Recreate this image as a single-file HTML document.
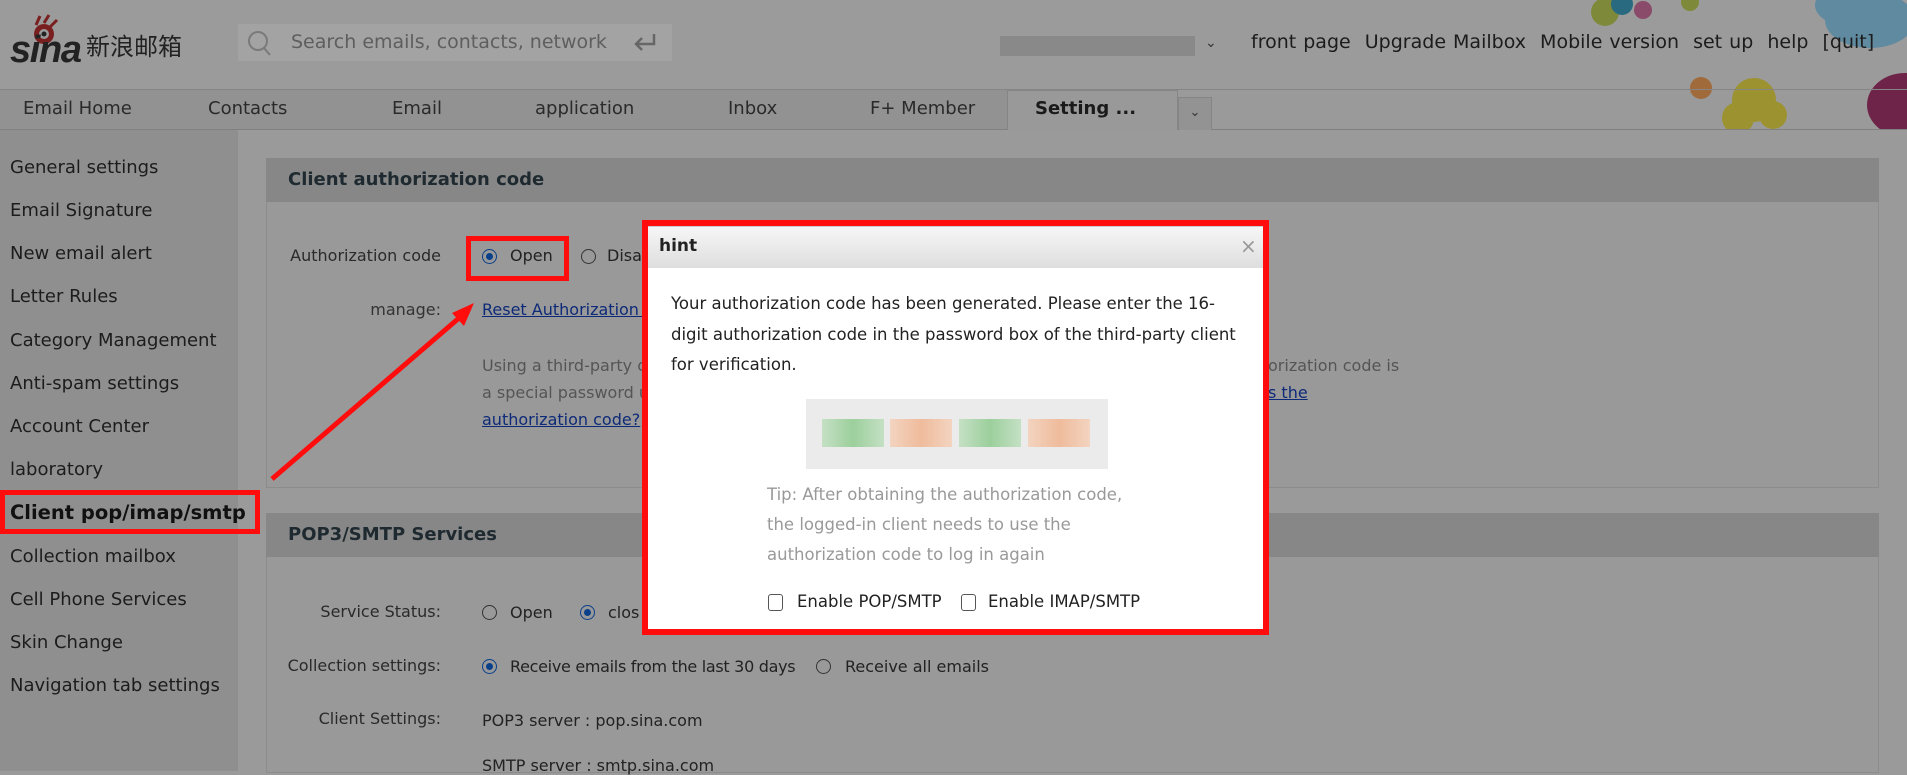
<!DOCTYPE html>
<html><head><meta charset="utf-8"><style>
*{margin:0;padding:0;box-sizing:border-box}
body{width:1907px;height:771px;overflow:hidden;background:#9a9a9a;font-family:"DejaVu Sans","Liberation Sans","Noto Sans CJK SC",sans-serif;position:relative;color:#1e1e1e}
.a{position:absolute;white-space:nowrap}
.side{font-size:18px;color:#1c1c1c}
.lbl{font-size:16px;color:#2a2a2a;text-align:right;width:200px}
.txt{font-size:16px;color:#222}
.radio{position:absolute;width:15px;height:15px;border:1.5px solid #333;border-radius:50%}
.radio.on{border-color:#0a3f8a}
.radio.on::after{content:"";position:absolute;left:2.5px;top:2.5px;width:7px;height:7px;border-radius:50%;background:#0a3f8a}
.lnk{color:#0d2a78;text-decoration:underline}
</style></head><body>
<div class="a" style="left:0;top:0;width:1907px;height:90px;background:#9b9b9b"></div>
<svg class="a" style="left:1560px;top:0" width="347" height="130">
<circle cx="83" cy="10" r="9" fill="#8a4a6a"/>
<circle cx="45" cy="12" r="14" fill="#7e8a3a"/><circle cx="62" cy="4" r="11" fill="#2a6a80"/>
<circle cx="130" cy="2" r="9" fill="#7e8a3a"/>
<ellipse cx="310" cy="20" rx="45" ry="28" fill="#5f8aa0"/><ellipse cx="285" cy="5" rx="30" ry="20" fill="#5f8aa0"/>
<circle cx="141" cy="88" r="11" fill="#a06a3a"/>
<circle cx="194" cy="100" r="22" fill="#9c9230"/><circle cx="178" cy="118" r="16" fill="#9c9230"/><circle cx="213" cy="115" r="14" fill="#9c9230"/>
<ellipse cx="345" cy="105" rx="38" ry="32" fill="#6e2448"/>
</svg>
<svg class="a" style="left:10px;top:14px" width="76" height="54">
<circle cx="34" cy="20" r="10" fill="#7a1f1f"/><circle cx="34" cy="20" r="5" fill="#9b9b9b"/><circle cx="34" cy="20" r="2.5" fill="#222"/>
<path d="M26 11 L30 2 M34 9 L39 1 M40 13 L47 6" stroke="#7a1f1f" stroke-width="3"/>
<text x="0" y="48" font-family="Liberation Sans" font-style="italic" font-weight="bold" font-size="38" fill="#222" textLength="72">sina</text>
</svg>
<div class="a" style="left:86px;top:27px;font-size:24px;color:#222;font-family:'Noto Sans CJK SC',sans-serif">新浪邮箱</div>
<div class="a" style="left:238px;top:24px;width:434px;height:37px;background:#a3a3a3"></div>
<svg class="a" style="left:246px;top:29px" width="28" height="28"><circle cx="12" cy="12" r="9" fill="none" stroke="#7a7a7a" stroke-width="2"/><path d="M18 19 L24 26" stroke="#7a7a7a" stroke-width="2"/></svg>
<div class="a" style="left:291px;top:31px;font-size:19px;color:#5e5e5e">Search emails, contacts, network</div>
<svg class="a" style="left:632px;top:32px" width="26" height="22"><path d="M22 2 V12 H4 M10 6 L4 12 L10 18" fill="none" stroke="#666" stroke-width="2.5"/></svg>
<div class="a" style="left:1000px;top:36px;width:195px;height:20px;background:#858585;opacity:.8"></div>
<div class="a" style="left:1205px;top:35px;font-size:14px;color:#333">⌄</div>
<div class="a" style="left:1251px;top:31px;font-size:19px;color:#1c1c1c;word-spacing:1px">front page&nbsp;&nbsp;Upgrade Mailbox&nbsp;&nbsp;Mobile version&nbsp;&nbsp;set up&nbsp;&nbsp;help&nbsp;&nbsp;[quit]</div>
<div class="a" style="left:0;top:89px;width:1907px;height:1px;background:#858585"></div>
<div class="a" style="left:0;top:90px;width:1007px;height:40px;background:#929292"></div>
<div class="a" style="left:0;top:129px;width:1907px;height:1px;background:#808080"></div>
<div class="a" style="top:98px;left:23px;font-size:18px;color:#2a2a2a">Email Home</div>
<div class="a" style="top:98px;left:208px;font-size:18px;color:#2a2a2a">Contacts</div>
<div class="a" style="top:98px;left:392px;font-size:18px;color:#2a2a2a">Email</div>
<div class="a" style="top:98px;left:535px;font-size:18px;color:#2a2a2a">application</div>
<div class="a" style="top:98px;left:728px;font-size:18px;color:#2a2a2a">Inbox</div>
<div class="a" style="top:98px;left:870px;font-size:18px;color:#2a2a2a">F+ Member</div>
<div class="a" style="left:1007px;top:90px;width:171px;height:40px;background:#999;border:1px solid #858585;border-bottom:none"></div>
<div class="a" style="top:98px;left:1035px;font-size:18px;font-weight:bold;color:#1a1a1a">Setting ...</div>
<div class="a" style="left:1178px;top:97px;width:34px;height:33px;background:#939393;border:1px solid #858585;border-bottom:none;font-size:13px;color:#333;text-align:center;line-height:30px">⌄</div>
<div class="a" style="left:0;top:130px;width:238px;height:641px;background:#8f8f8f"></div>
<div class="a side" style="left:10px;top:157px">General settings</div>
<div class="a side" style="left:10px;top:200px">Email Signature</div>
<div class="a side" style="left:10px;top:243px">New email alert</div>
<div class="a side" style="left:10px;top:286px">Letter Rules</div>
<div class="a side" style="left:10px;top:330px">Category Management</div>
<div class="a side" style="left:10px;top:373px">Anti-spam settings</div>
<div class="a side" style="left:10px;top:416px">Account Center</div>
<div class="a side" style="left:10px;top:459px">laboratory</div>
<div class="a" style="left:0;top:490px;width:260px;height:44px;border:5px solid #ff0d0d;overflow:hidden"><div style="position:absolute;left:5px;top:6px;font-size:19.5px;font-weight:bold;color:#111;white-space:nowrap">Client pop/imap/smtp</div></div>
<div class="a side" style="left:10px;top:546px">Collection mailbox</div>
<div class="a side" style="left:10px;top:589px">Cell Phone Services</div>
<div class="a side" style="left:10px;top:632px">Skin Change</div>
<div class="a side" style="left:10px;top:675px">Navigation tab settings</div>
<div class="a" style="left:266px;top:158px;width:1613px;height:330px;border:1px solid #8c8c8c;background:#999"></div>
<div class="a" style="left:266px;top:158px;width:1613px;height:44px;background:#878787"></div>
<div class="a" style="left:288px;top:169px;font-size:18px;font-weight:bold;color:#1e2a30">Client authorization code</div>
<div class="a lbl" style="left:241px;top:246px">Authorization code</div>
<div class="radio on" style="left:482px;top:249px"></div>
<div class="a txt" style="left:510px;top:246px">Open</div>
<div class="radio" style="left:581px;top:249px"></div>
<div class="a txt" style="left:607px;top:246px">Disa</div>
<div class="a" style="left:466px;top:236px;width:103px;height:45px;border:5px solid #ff0d0d"></div>
<div class="a lbl" style="left:241px;top:300px;color:#333">manage:</div>
<div class="a txt lnk" style="left:482px;top:300px">Reset Authorization C</div>
<div class="a" style="left:482px;top:352px;font-size:16px;color:#555;line-height:27px">Using a third-party c<br>a special password u<br><span class="lnk">authorization code?</span></div>
<div class="a" style="left:1268px;top:352px;font-size:16px;color:#555;line-height:27px">orization code is<br><span class="lnk">s the</span></div>
<div class="a" style="left:266px;top:513px;width:1613px;height:260px;border:1px solid #8c8c8c;background:#999"></div>
<div class="a" style="left:266px;top:513px;width:1613px;height:44px;background:#878787"></div>
<div class="a" style="left:288px;top:524px;font-size:18px;font-weight:bold;color:#1e2a30">POP3/SMTP Services</div>
<div class="a lbl" style="left:241px;top:602px">Service Status:</div>
<div class="radio" style="left:482px;top:605px"></div>
<div class="a txt" style="left:510px;top:603px">Open</div>
<div class="radio on" style="left:580px;top:605px"></div>
<div class="a txt" style="left:608px;top:603px">clos</div>
<div class="a lbl" style="left:241px;top:656px">Collection settings:</div>
<div class="radio on" style="left:482px;top:659px"></div>
<div class="a txt" style="left:510px;top:657px;letter-spacing:-0.3px">Receive emails from the last 30 days</div>
<div class="radio" style="left:816px;top:659px"></div>
<div class="a txt" style="left:845px;top:657px">Receive all emails</div>
<div class="a lbl" style="left:241px;top:709px">Client Settings:</div>
<div class="a txt" style="left:482px;top:711px">POP3 server : pop.sina.com</div>
<div class="a txt" style="left:482px;top:756px">SMTP server : smtp.sina.com</div>
<svg class="a" style="left:0;top:0" width="600" height="771"><path d="M272 479 L466 312" stroke="#ff0d0d" stroke-width="5"/><path d="M474 303 L452 313 L464 326 Z" fill="#ff0d0d"/></svg>
<div class="a" style="left:642px;top:220px;width:627px;height:415px;border:6px solid #ff0d0d;background:#fff"></div>
<div class="a" style="left:648px;top:226px;width:615px;height:42px;background:linear-gradient(#f6f6f6,#dedede);border-top:1px solid #ccc"></div>
<div class="a" style="left:659px;top:236px;font-size:17px;font-weight:bold;color:#222">hint</div>
<div class="a" style="left:1240px;top:234px;font-size:20px;color:#999">×</div>
<div class="a" style="left:671px;top:289px;font-size:16.5px;color:#222;line-height:30.5px">Your authorization code has been generated. Please enter the 16-<br>digit authorization code in the password box of the third-party client<br>for verification.</div>
<div class="a" style="left:806px;top:399px;width:302px;height:70px;background:#ebebeb"></div>
<div class="a" style="left:822px;top:419px;width:62px;height:28px;background:linear-gradient(90deg,#c4e0c4,#9ccf9c,#c4e0c4)"></div>
<div class="a" style="left:890px;top:419px;width:62px;height:28px;background:linear-gradient(90deg,#f3d4c0,#efbb9c,#f3d4c0)"></div>
<div class="a" style="left:959px;top:419px;width:62px;height:28px;background:linear-gradient(90deg,#c4e0c4,#9ccf9c,#c4e0c4)"></div>
<div class="a" style="left:1028px;top:419px;width:62px;height:28px;background:linear-gradient(90deg,#f3d4c0,#efbb9c,#f3d4c0)"></div>
<div class="a" style="left:767px;top:480px;font-size:16.5px;color:#999;line-height:30px">Tip: After obtaining the authorization code,<br>the logged-in client needs to use the<br>authorization code to log in again</div>
<div class="a" style="left:768px;top:594px;width:15px;height:17px;border:1.5px solid #555;border-radius:3px"></div>
<div class="a" style="left:797px;top:592px;font-size:16.5px;color:#222">Enable POP/SMTP</div>
<div class="a" style="left:961px;top:594px;width:15px;height:17px;border:1.5px solid #555;border-radius:3px"></div>
<div class="a" style="left:988px;top:592px;font-size:16.5px;color:#222">Enable IMAP/SMTP</div>
</body></html>
